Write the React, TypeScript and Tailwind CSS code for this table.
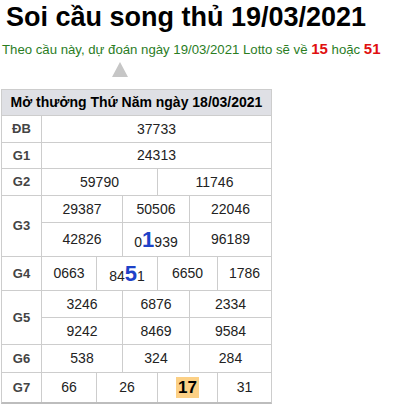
import type { ReactNode } from 'react';

const Label = ({ children }: { children: ReactNode }) => (
  <div className="w-[40px] shrink-0 flex items-center justify-center border-r border-[#cdcdcd] text-[13px] font-bold text-[#444]">
    {children}
  </div>
);

const Cell = ({ className = '', children }: { className?: string; children: ReactNode }) => (
  <div className={`flex items-center justify-center text-[14px] text-[#222] ${className}`}>{children}</div>
);

const Big = ({ children }: { children: ReactNode }) => (
  <span className="text-[22px] font-bold text-[#1d42c8] leading-none">{children}</span>
);

const App = () => {
  return (
    <div className="font-['Liberation_Sans',Arial,sans-serif] bg-white min-h-[406px]">
      <h1 className="pl-[6px] text-[27px] font-bold leading-[34px] text-black">Soi cầu song thủ 19/03/2021</h1>
      <p className="mt-[3px] pl-[2px] text-[13.2px] leading-[24px] text-[#2b7d1f] whitespace-nowrap">
        Theo cầu này, dự đoán ngày 19/03/2021 Lotto sẽ về{' '}
        <span className="text-[15px] font-bold text-[#e01010]">15</span> hoặc{' '}
        <span className="text-[15px] font-bold text-[#e01010]">51</span>
      </p>

      <div className="ml-[112px] w-0 h-0 border-l-[8px] border-r-[8px] border-b-[15px] border-l-transparent border-r-transparent border-b-[#c6c6c6]" />

      <div className="mt-[12px] ml-[1px] w-[271px] border-x border-t border-b-2 border-x-[#cdcdcd] border-t-[#cdcdcd] border-b-[#bdbdbd]">
        <div className="h-[26px] flex items-center justify-center bg-[#dfe0e5] border-b border-[#cdcdcd] text-[14px] font-bold text-black">
          Mở thưởng Thứ Năm ngày 18/03/2021
        </div>

        <div className="flex h-[27px] border-b border-[#cdcdcd]">
          <Label>ĐB</Label>
          <Cell className="flex-1">37733</Cell>
        </div>

        <div className="flex h-[26px] border-b border-[#cdcdcd]">
          <Label>G1</Label>
          <Cell className="flex-1">24313</Cell>
        </div>

        <div className="flex h-[27px] border-b border-[#cdcdcd]">
          <Label>G2</Label>
          <Cell className="w-[116px] border-r border-[#cdcdcd]">59790</Cell>
          <Cell className="flex-1">11746</Cell>
        </div>

        <div className="flex h-[61px] border-b border-[#cdcdcd]">
          <Label>G3</Label>
          <div className="flex-1 flex flex-col">
            <div className="flex h-[27px] border-b border-[#cdcdcd]">
              <Cell className="w-[81px] border-r border-[#cdcdcd]">29387</Cell>
              <Cell className="w-[67px] border-r border-[#cdcdcd]">50506</Cell>
              <Cell className="flex-1">22046</Cell>
            </div>
            <div className="flex flex-1">
              <Cell className="w-[81px] border-r border-[#cdcdcd]">42826</Cell>
              <Cell className="w-[67px] border-r border-[#cdcdcd]">
                <span className="flex items-baseline pt-[3px]">
                  0<Big>1</Big>939
                </span>
              </Cell>
              <Cell className="flex-1">96189</Cell>
            </div>
          </div>
        </div>

        <div className="flex h-[34px] border-b border-[#cdcdcd]">
          <Label>G4</Label>
          <Cell className="w-[55px] border-r border-[#cdcdcd]">0663</Cell>
          <Cell className="w-[61px] border-r border-[#cdcdcd]">
            <span className="flex items-baseline pt-[3px]">
              84<Big>5</Big>1
            </span>
          </Cell>
          <Cell className="w-[60px] border-r border-[#cdcdcd]">6650</Cell>
          <Cell className="flex-1">1786</Cell>
        </div>

        <div className="flex h-[54px] border-b border-[#cdcdcd]">
          <Label>G5</Label>
          <div className="flex-1 flex flex-col">
            <div className="flex h-[27px] border-b border-[#cdcdcd]">
              <Cell className="w-[81px] border-r border-[#cdcdcd]">3246</Cell>
              <Cell className="w-[67px] border-r border-[#cdcdcd]">6876</Cell>
              <Cell className="flex-1">2334</Cell>
            </div>
            <div className="flex flex-1">
              <Cell className="w-[81px] border-r border-[#cdcdcd]">9242</Cell>
              <Cell className="w-[67px] border-r border-[#cdcdcd]">8469</Cell>
              <Cell className="flex-1">9584</Cell>
            </div>
          </div>
        </div>

        <div className="flex h-[28px] border-b border-[#cdcdcd]">
          <Label>G6</Label>
          <Cell className="w-[81px] border-r border-[#cdcdcd]">538</Cell>
          <Cell className="w-[67px] border-r border-[#cdcdcd]">324</Cell>
          <Cell className="flex-1">284</Cell>
        </div>

        <div className="flex h-[29px]">
          <Label>G7</Label>
          <Cell className="w-[55px] border-r border-[#cdcdcd]">66</Cell>
          <Cell className="w-[61px] border-r border-[#cdcdcd]">26</Cell>
          <Cell className="w-[60px] border-r border-[#cdcdcd]">
            <span className="bg-[#fcd085] px-[2px] text-[17px] font-bold leading-[21px] text-black">17</span>
          </Cell>
          <Cell className="flex-1">31</Cell>
        </div>
      </div>
    </div>
  );
};

export default App;
